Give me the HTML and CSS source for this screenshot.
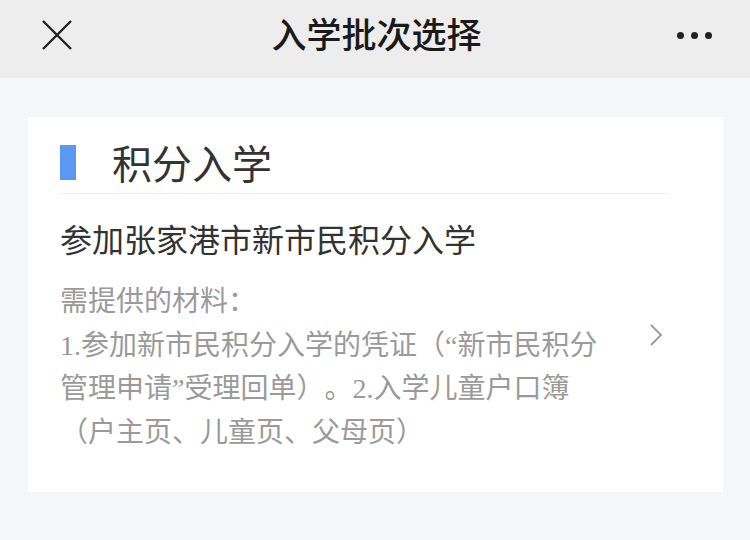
FILE: index.html
```html
<!DOCTYPE html>
<html lang="zh-CN">
<head>
	<meta charset="UTF-8">
	<meta name="viewport" content="width=device-width, initial-scale=1.0">
	<title>入学批次选择</title>
	<link rel="stylesheet" href="styles.css">
</head>
<body>

	<div class="topbar">
		<span class="icon-btn">
			<svg width="32" height="32" viewBox="0 0 32 32"><path d="M2 2 L30 30 M30 2 L2 30" stroke="#222" stroke-width="2.4" fill="none"/></svg>
		</span>
		<h1>入学批次选择</h1>
		<span class="icon-btn more">
			<i></i><i></i><i></i>
		</span>
	</div>

	<div class="card">
		<div class="card-head">
			<span class="bar"></span>
			<h2>积分入学</h2>
		</div>

		<div class="item">
			<div class="item-body">
				<div class="item-title">参加张家港市新市民积分入学</div>
				<div class="materials">需提供的材料：<br>1.参加新市民积分入学的凭证（“新市民积分管理申请”受理回单）。2.入学儿童户口簿（户主页、儿童页、父母页）</div>
			</div>
			<svg class="chevron" width="14" height="22" viewBox="0 0 14 22"><path d="M2 1 L12 11 L2 21" stroke="#999" stroke-width="1.8" fill="none"/></svg>
		</div>
	</div>

</body>
</html>
```

FILE: styles.css
```css
:root{
	font-family: "Noto Sans CJK SC", sans-serif;
}

body{
	margin: 0;
	background-color: #f5f6f7;
	color: #333;
}

.topbar{
	display: flex;
	align-items: center;
	justify-content: space-between;
	height: 70px;
	padding: 0 38px 8px 41px;
	background-color: #ededed;
}

.topbar h1{
	margin: 0 0 5px;
	font-size: 35px;
	font-weight: 500;
	color: #1a1a1a;
}

.icon-btn{
	display: flex;
	align-items: center;
	width: 36px;
}

.more{
	justify-content: flex-end;
	gap: 7px;
}

.more i{
	width: 7px;
	height: 7px;
	border-radius: 50%;
	background-color: #222;
}

.card{
	margin: 39px 27px 0 28px;
	padding: 20px 55px 38px 32px;
	background-color: #fff;
}

.card-head{
	display: flex;
	align-items: center;
	padding-bottom: 6px;
	border-bottom: 1px solid #eee;
}

.bar{
	width: 16px;
	height: 35px;
	background-color: #5b98f2;
	margin-right: 36px;
}

.card-head h2{
	margin: 0;
	font-size: 40px;
	line-height: 50px;
	font-weight: 400;
	color: #333;
}

.item{
	display: flex;
	align-items: center;
	justify-content: space-between;
	margin-top: 22px;
}

.item-body{
	width: 552px;
}

.item-title{
	font-size: 32px;
	line-height: 44px;
	color: #333;
}

.materials{
	margin-top: 20px;
	font-family: "Liberation Serif", "Noto Sans CJK SC", serif;
	font-size: 28px;
	line-height: 43.5px;
	color: #9a9a9a;
	text-spacing-trim: space-all;
}

.chevron{
	margin-right: 5px;
}
```
